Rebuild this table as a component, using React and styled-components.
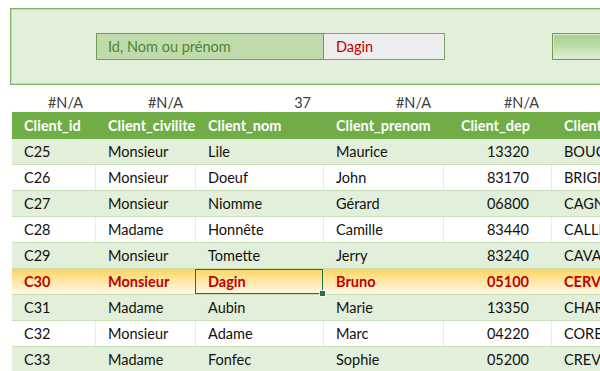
import React from "react";
import styled, { createGlobalStyle, css } from "styled-components";

const GlobalStyle = createGlobalStyle`
  html, body {
    margin: 0;
    padding: 0;
    background: #ffffff;
  }
  body {
    font-family: Lato, "Open Sans", "Liberation Sans", sans-serif;
    overflow: hidden;
  }
`;

const columns = [
  { key: "id", title: "Client_id", width: 84 },
  { key: "civ", title: "Client_civilite", width: 100 },
  { key: "nom", title: "Client_nom", width: 128 },
  { key: "prenom", title: "Client_prenom", width: 120 },
  { key: "dep", title: "Client_dep", width: 108, right: true },
  { key: "ville", title: "Client_ville", width: 140 },
];

const checks = ["#N/A", "#N/A", "37", "#N/A", "#N/A", ""];

const clients = [
  ["C25", "Monsieur", "Lile", "Maurice", "13320", "BOUC-BEL-AIR"],
  ["C26", "Monsieur", "Doeuf", "John", "83170", "BRIGNOLES"],
  ["C27", "Monsieur", "Niomme", "Gérard", "06800", "CAGNES-SUR-MER"],
  ["C28", "Madame", "Honnête", "Camille", "83440", "CALLIAN"],
  ["C29", "Monsieur", "Tomette", "Jerry", "83240", "CAVALAIRE-SUR-MER"],
  ["C30", "Monsieur", "Dagin", "Bruno", "05100", "CERVIERES"],
  ["C31", "Madame", "Aubin", "Marie", "13350", "CHARLEVAL"],
  ["C32", "Monsieur", "Adame", "Marc", "04220", "CORBIERES"],
  ["C33", "Madame", "Fonfec", "Sophie", "05200", "CREVOUX"],
];

const found = "C30";

const App = () => {
  return (
    <Sheet>
      <GlobalStyle />
      <SearchPanel>
        <SearchLabel>Id, Nom ou prénom</SearchLabel>
        <SearchValue>Dagin</SearchValue>
        <SearchButton />
      </SearchPanel>

      <CheckRow>
        {columns.map((col, i) => (
          <CheckCell key={col.key} $width={col.width}>
            {checks[i]}
          </CheckCell>
        ))}
      </CheckRow>

      <Table>
        <HeadRow>
          {columns.map((col) => (
            <HeadCell key={col.key} $width={col.width} $right={col.right}>
              {col.title}
            </HeadCell>
          ))}
        </HeadRow>
        {clients.map((row, r) => {
          const hit = row[0] === found;
          const band = r % 2 === 0;
          return (
            <Row key={row[0]} $band={band} $hit={hit}>
              {columns.map((col, c) => (
                <Cell
                  key={col.key}
                  $width={col.width}
                  $right={col.right}
                  $band={band || hit}
                  $hit={hit}
                  $selected={hit && col.key === "nom"}
                >
                  {row[c]}
                  {hit && col.key === "nom" && <FillHandle />}
                </Cell>
              ))}
            </Row>
          );
        })}
      </Table>
    </Sheet>
  );
};

export default App;

const Sheet = styled.div`
  width: 600px;
  height: 371px;
  overflow: hidden;
  background: #fff;
`;

const SearchPanel = styled.div`
  margin: 8px 0 0 10px;
  width: 640px;
  height: 77px;
  box-sizing: border-box;
  background: #e2efda;
  border: 1px solid #80af68;
  box-shadow: inset 0 0 0 1px #c3deb2;
  display: flex;
  align-items: center;
  padding-left: 85px;
`;

const SearchLabel = styled.div`
  width: 228px;
  height: 27px;
  box-sizing: border-box;
  border: 1px solid #6f9f55;
  background-color: #c9e2b8;
  background-image: radial-gradient(#b4d39c 0.6px, transparent 0.8px);
  background-size: 2px 2px;
  color: #548235;
  font-size: 14.5px;
  display: flex;
  align-items: center;
  padding-left: 11px;
`;

const SearchValue = styled.div`
  width: 121px;
  height: 27px;
  box-sizing: border-box;
  border: 1px solid #7aa862;
  border-left: none;
  background: #ededed;
  color: #c00000;
  font-size: 14.5px;
  display: flex;
  align-items: center;
  padding-left: 12px;
`;

const SearchButton = styled.div`
  margin-left: 107px;
  width: 80px;
  height: 27px;
  box-sizing: border-box;
  border: 1px solid #6f9f55;
  box-shadow: inset 0 0 0 1px #d7eacb;
  background: linear-gradient(#a9d08e 0%, #bcdba6 45%, #d3e8c5 80%, #e2efda 100%);
`;

const CheckRow = styled.div`
  display: flex;
  margin: 8px 0 0 12px;
  height: 19px;
`;

const CheckCell = styled.div`
  flex: 0 0 ${(p) => p.$width}px;
  box-sizing: border-box;
  text-align: right;
  padding-right: 13px;
  font-size: 14.5px;
  line-height: 19px;
  color: #404040;
`;

const Table = styled.div`
  margin-left: 12px;
  width: 700px;
`;

const HeadRow = styled.div`
  display: flex;
  height: 27px;
  background: #70ad47;
`;

const HeadCell = styled.div`
  flex: 0 0 ${(p) => p.$width}px;
  box-sizing: border-box;
  padding: 0 ${(p) => (p.$right ? "22px" : "0")} 0 ${(p) => (p.$right ? "0" : "12px")};
  text-align: ${(p) => (p.$right ? "right" : "left")};
  color: #fff;
  font-weight: 700;
  font-size: 14.5px;
  line-height: 27px;
  white-space: nowrap;
`;

const Row = styled.div`
  display: flex;
  height: 26px;
  box-sizing: border-box;
  border-bottom: 1px solid #c6e0b4;
  background: ${(p) => (p.$band ? "#e2efda" : "#ffffff")};
  ${(p) =>
    p.$hit &&
    css`
      background: linear-gradient(#ffd45c 0%, #ffe49a 40%, #fff4d4 85%, #fff8e4 100%);
    `}
`;

const Cell = styled.div`
  position: relative;
  flex: 0 0 ${(p) => p.$width}px;
  box-sizing: border-box;
  padding: 0 ${(p) => (p.$right ? "22px" : "0")} 0 ${(p) => (p.$right ? "0" : "12px")};
  text-align: ${(p) => (p.$right ? "right" : "left")};
  border-right: 1px solid ${(p) => (p.$band ? "transparent" : "#ebebeb")};
  font-size: 14.5px;
  line-height: 25px;
  white-space: nowrap;
  overflow: hidden;
  color: ${(p) => (p.$hit ? "#c00000" : "#111")};
  font-weight: ${(p) => (p.$hit ? 700 : 400)};
  ${(p) =>
    p.$selected &&
    css`
      overflow: visible;
      box-shadow: inset 0 0 0 1px #217346;
      margin-left: -1px;
      flex-basis: ${p.$width + 1}px;
      padding-left: 13px;
    `}
`;

const FillHandle = styled.span`
  position: absolute;
  right: -3px;
  bottom: -3px;
  width: 5px;
  height: 5px;
  background: #217346;
  border: 1px solid #fff;
`;
